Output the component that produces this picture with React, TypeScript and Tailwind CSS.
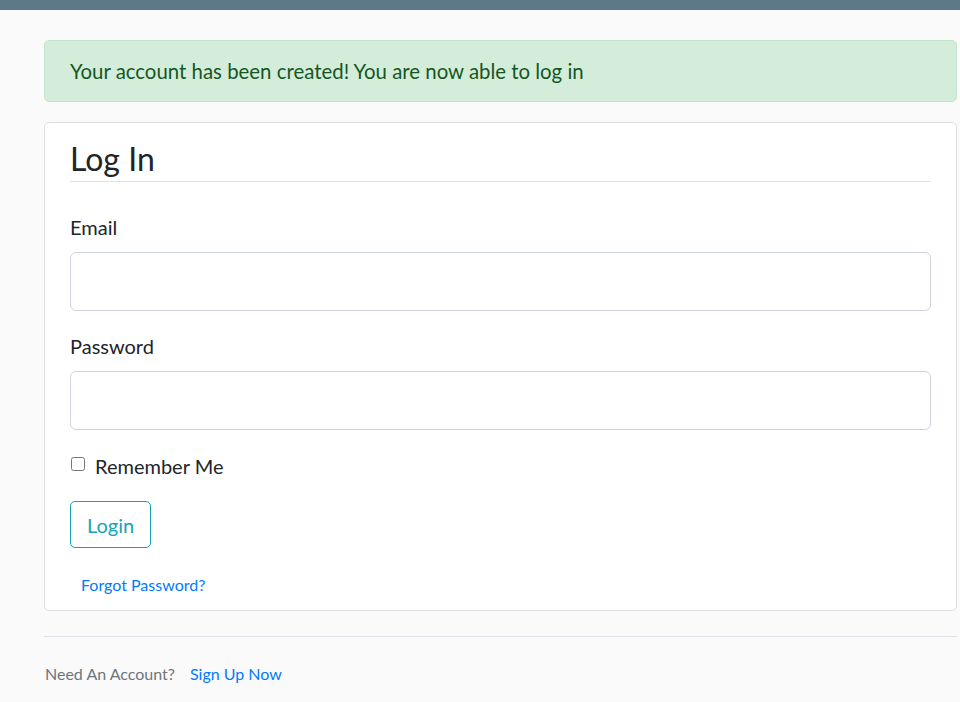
import React from 'react';

const FONT = "font-['Lato','Open_Sans','Liberation_Sans',sans-serif]";

export default function App() {
  return (
    <div className={`min-h-screen bg-[#fafafa] text-[#212529] ${FONT}`}>
      <div className="h-[10px] bg-[#5f7889]" />

      <div className="pl-[44px] w-[957px]">
        {/* flash message */}
        <div className="mt-[30px] h-[62px] flex items-center px-[25px] rounded-[5px] border border-[#c3e6cb] bg-[#d4edda] text-[#155724] text-[20.4px] leading-[30px]">
          Your account has been created! You are now able to log in
        </div>

        {/* login card */}
        <div className="mt-[20px] bg-white border border-[#dfdfdf] rounded-[5px] px-[25px] pt-[17px] pb-[13px]">
          <form>
            <fieldset>
              <div className="text-[32px] leading-[38px] pb-[3px] border-b border-[#dee2e6]">Log In</div>

              <div className="mt-[30px]">
                <label className="block text-[20px] leading-[30px] mb-[10px]">Email</label>
                <input type="email" className="block w-full h-[59px] border border-[#ced4da] rounded-[6px] bg-white" />
              </div>

              <div className="mt-[20px]">
                <label className="block text-[20px] leading-[30px] mb-[10px]">Password</label>
                <input type="password" className="block w-full h-[59px] border border-[#ced4da] rounded-[6px] bg-white" />
              </div>

              <div className="mt-[21px] flex items-center">
                <input type="checkbox" className="w-[14px] h-[14px] ml-[1px] mb-[4px] mt-0" />
                <span className="ml-[10px] text-[20px] leading-[30px]">Remember Me</span>
              </div>
            </fieldset>

            <button
              type="button"
              className="mt-[20px] h-[47px] px-[16px] rounded-[5px] border border-[#17a2b8] text-[#17a2b8] text-[20px] leading-[30px]"
            >
              Login
            </button>

            <div className="mt-[25px] pl-[11px] text-[16px] leading-[24px]">
              <a href="#" className="text-[#007bff]">Forgot Password?</a>
            </div>
          </form>
        </div>

        <div className="mt-[25px] border-t border-[#dee2e6] pt-[25px] pl-[1px] text-[16px] leading-[24px]">
          <span className="text-[#6c757d]">Need An Account?</span>
          <a href="#" className="ml-[15px] text-[#007bff]">Sign Up Now</a>
        </div>
      </div>
    </div>
  );
}
